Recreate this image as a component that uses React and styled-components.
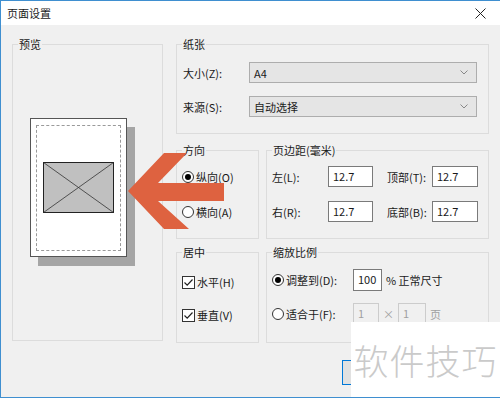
import React from 'react';
import styled, { createGlobalStyle } from 'styled-components';

const GlobalStyle = createGlobalStyle`
	html, body {
		margin: 0;
		padding: 0;
		background: #ffffff;
	}
	body {
		font-family: 'Noto Sans CJK SC', 'Noto Sans', sans-serif;
		font-size: 11px;
		color: #1a1a1a;
	}
`;

const Window = styled.div`
	position: relative;
	width: 500px;
	height: 398px;
	box-sizing: border-box;
	border: 1px solid #3f8fd0;
	border-right: none;
	background: #f0f0f0;
	overflow: hidden;
	display: flex;
	flex-direction: column;
`;

const TitleBar = styled.div`
	height: 24px;
	flex: none;
	background: #fff;
	display: flex;
	align-items: center;
	justify-content: space-between;
	padding: 0 14px 0 6px;
	font-size: 11px;
	line-height: 16px;
`;

const Body = styled.div`
	display: grid;
	grid-template-columns: 151px 313px;
	column-gap: 13px;
	padding: 19px 0 0 11px;
	align-items: start;
`;

const RightColumn = styled.div`
	display: flex;
	flex-direction: column;
`;

const Group = styled.div`
	position: relative;
	box-sizing: border-box;
	height: ${(p) => p.$h}px;
	border: 1px solid #dcdcdc;
	margin-bottom: ${(p) => p.$mb || 0}px;
`;

const Legend = styled.span`
	position: absolute;
	top: -9px;
	left: 5px;
	padding: 0 1px;
	background: #f0f0f0;
	line-height: 16px;
`;

const GroupRow = styled.div`
	display: grid;
	grid-template-columns: 83px 223px;
	column-gap: 7px;
	margin-bottom: ${(p) => p.$mb || 0}px;
`;

const FormGrid = styled.div`
	display: grid;
	grid-template-columns: ${(p) => p.$cols};
	row-gap: ${(p) => p.$rowGap}px;
	padding: ${(p) => p.$pad};
	align-items: center;
`;

const Label = styled.span`
	line-height: 16px;
	white-space: nowrap;
	color: ${(p) => (p.$muted ? '#a0a0a0' : 'inherit')};
`;

const Select = styled.div`
	box-sizing: border-box;
	height: 21px;
	border: 1px solid #adadad;
	background: #e5e5e5;
	display: flex;
	align-items: center;
	justify-content: space-between;
	padding: 0 8px 0 4px;
	line-height: 16px;
`;

const TextBox = styled.div`
	box-sizing: border-box;
	width: ${(p) => p.$w}px;
	height: ${(p) => p.$h || 21}px;
	border: 1px solid ${(p) => (p.$disabled ? '#cccccc' : '#7a7a7a')};
	background: ${(p) => (p.$disabled ? '#f0f0f0' : '#fff')};
	color: ${(p) => (p.$disabled ? '#a0a0a0' : 'inherit')};
	padding: 1px 0 0 4px;
	line-height: 16px;
`;

const OptionList = styled.div`
	display: flex;
	flex-direction: column;
	gap: ${(p) => p.$gap}px;
	padding: ${(p) => p.$pad};
`;

const Option = styled.div`
	display: flex;
	align-items: center;
	gap: 2px;
	height: 16px;
	line-height: 16px;
	white-space: nowrap;
`;

const RadioCircle = styled.span`
	box-sizing: border-box;
	width: 12px;
	height: 12px;
	border-radius: 50%;
	border: 1px solid #333;
	background: #fff;
	display: flex;
	align-items: center;
	justify-content: center;
	&::after {
		content: '';
		width: 6px;
		height: 6px;
		border-radius: 50%;
		background: ${(p) => (p.$on ? '#000' : 'transparent')};
	}
`;

const CheckBox = styled.span`
	box-sizing: border-box;
	width: 13px;
	height: 13px;
	border: 1px solid #333;
	background: #fff;
	display: flex;
	align-items: center;
	justify-content: center;
`;

const Inline = styled.div`
	display: flex;
	align-items: center;
	gap: ${(p) => p.$gap || 0}px;
`;

const PreviewArea = styled.div`
	padding: 73px 0 0 17px;
`;

const Page = styled.div`
	box-sizing: border-box;
	width: 97px;
	height: 139px;
	background: #fff;
	border: 1px solid #555;
	box-shadow: 8px 9px 0 #a5a5a5;
	padding: 6px 5px 5px 5px;
`;

const DashedMargin = styled.div`
	box-sizing: border-box;
	height: 100%;
	border: 1px dashed #9a9a9a;
	padding: 36px 0 0 6px;
`;

const ButtonRow = styled.div`
	display: flex;
	gap: 8px;
	padding: 17px 0 0 166px;
`;

const Button = styled.div`
	box-sizing: border-box;
	flex: none;
	width: 75px;
	height: 25px;
	border: 1px solid ${(p) => (p.$primary ? '#0078d7' : '#adadad')};
	background: #e1e1e1;
`;

const Arrow = styled.svg`
	position: absolute;
	left: 127px;
	top: 152px;
`;

const Watermark = styled.div`
	position: absolute;
	right: 0;
	bottom: 0;
	width: 149px;
	height: 75px;
	background: #fff;
	display: flex;
	align-items: center;
	justify-content: center;
	font-size: 35px;
	font-weight: 300;
	color: #cacaca;
	letter-spacing: 1px;
`;

const Radio = ({ on, children }) => (
	<Option>
		<RadioCircle $on={on} />
		{children}
	</Option>
);

const Check = ({ children }) => (
	<Option>
		<CheckBox>
			<svg width="11" height="11" viewBox="0 0 11 11">
				<path d="M1.5 5.5 L4.2 8.2 L9.5 2.5" fill="none" stroke="#222" strokeWidth="1.2" />
			</svg>
		</CheckBox>
		{children}
	</Option>
);

const Chevron = () => (
	<svg width="8" height="5" viewBox="0 0 8 5">
		<path d="M0.5 0.5 L4 4 L7.5 0.5" fill="none" stroke="#888" />
	</svg>
);

const App = () => (
	<>
		<GlobalStyle />
		<Window>
			<TitleBar>
				<span>页面设置</span>
				<svg width="11" height="11" viewBox="0 0 11 11">
					<path d="M0.5 0.5 L10.5 10.5 M10.5 0.5 L0.5 10.5" stroke="#222" strokeWidth="1" />
				</svg>
			</TitleBar>
			<Body>
				<Group $h={297}>
					<Legend>预览</Legend>
					<PreviewArea>
						<Page>
							<DashedMargin>
								<svg width="71" height="51" viewBox="0 0 71 51">
									<rect x="0.5" y="0.5" width="70" height="50" fill="#c0c0c0" stroke="#222" />
									<path d="M0.5 0.5 L70.5 50.5 M70.5 0.5 L0.5 50.5" stroke="#333" strokeWidth="0.8" />
								</svg>
							</DashedMargin>
						</Page>
					</PreviewArea>
				</Group>
				<RightColumn>
					<Group $h={90} $mb={16}>
						<Legend>纸张</Legend>
						<FormGrid $cols="66px 228px" $rowGap={13} $pad="17px 0 0 6px">
							<Label>大小(Z):</Label>
							<Select>
								<span>A4</span>
								<Chevron />
							</Select>
							<Label>来源(S):</Label>
							<Select>
								<span>自动选择</span>
								<Chevron />
							</Select>
						</FormGrid>
					</Group>
					<GroupRow $mb={13}>
						<Group $h={89}>
							<Legend>方向</Legend>
							<OptionList $gap={19} $pad="18px 0 0 5px">
								<Radio on>纵向(O)</Radio>
								<Radio>横向(A)</Radio>
							</OptionList>
						</Group>
						<Group $h={89}>
							<Legend>页边距(毫米)</Legend>
							<FormGrid $cols="56px 45px 14px 45px 46px" $rowGap={14} $pad="15px 0 0 5px">
								<Label>左(L):</Label>
								<TextBox $w={45}>12.7</TextBox>
								<span />
								<Label>顶部(T):</Label>
								<TextBox $w={46}>12.7</TextBox>
								<Label>右(R):</Label>
								<TextBox $w={45}>12.7</TextBox>
								<span />
								<Label>底部(B):</Label>
								<TextBox $w={46}>12.7</TextBox>
							</FormGrid>
						</Group>
					</GroupRow>
					<GroupRow>
						<Group $h={91}>
							<Legend>居中</Legend>
							<OptionList $gap={17} $pad="21px 0 0 5px">
								<Check>水平(H)</Check>
								<Check>垂直(V)</Check>
							</OptionList>
						</Group>
						<Group $h={91}>
							<Legend>缩放比例</Legend>
							<FormGrid $cols="81px auto" $rowGap={12} $pad="16px 0 0 5px">
								<Radio on>调整到(D):</Radio>
								<Inline $gap={4}>
									<TextBox $w={29} $h={22}>100</TextBox>
									<Label>% 正常尺寸</Label>
								</Inline>
								<Radio>适合于(F):</Radio>
								<Inline>
									<TextBox $w={26} $h={21} $disabled>1</TextBox>
									<Label $muted style={{ width: 19, textAlign: 'center' }}>×</Label>
									<TextBox $w={28} $h={21} $disabled>1</TextBox>
									<Label $muted style={{ marginLeft: 4 }}>页</Label>
								</Inline>
							</FormGrid>
						</Group>
					</GroupRow>
					<ButtonRow>
						<Button $primary />
						<Button />
					</ButtonRow>
				</RightColumn>
			</Body>
			<Arrow width="97" height="77" viewBox="0 0 97 77">
				<polygon
					points="0,38 36,0 59,0 30,30 96,30 96,48 30,48 61,76 36,76"
					fill="#de6240"
				/>
			</Arrow>
			<Watermark>软件技巧</Watermark>
		</Window>
	</>
);

export default App;
